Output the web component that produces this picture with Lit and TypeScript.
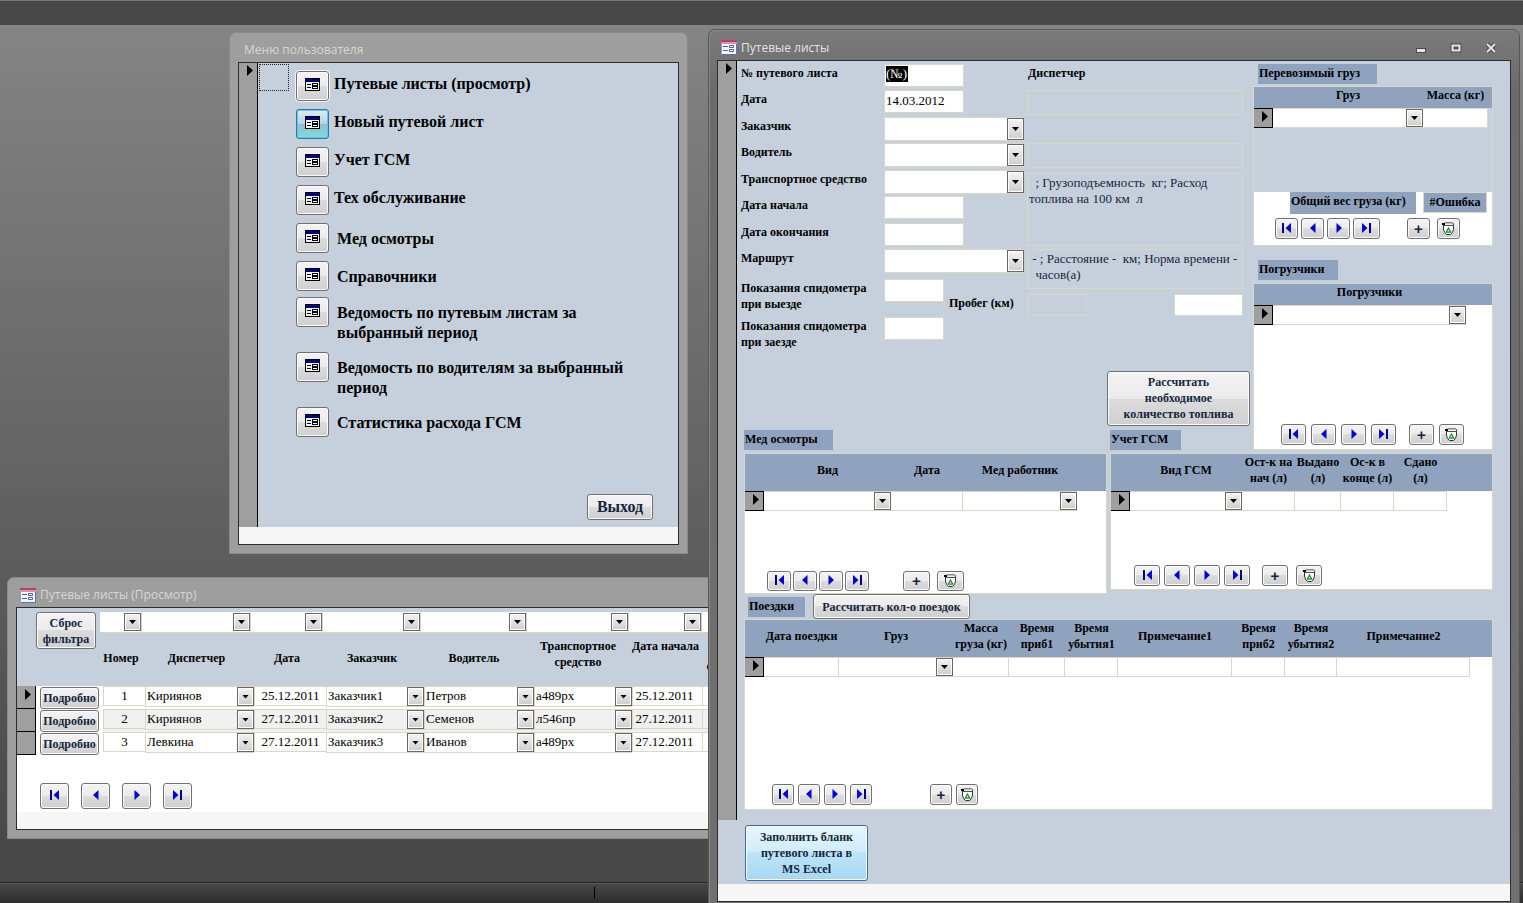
import { LitElement, html, css, svg, nothing, TemplateResult } from "lit";
import { customElement, state } from "lit/decorators.js";
import { classMap } from "lit/directives/class-map.js";

type Column = { title: string; width: number; combo?: boolean };
type Trip = {
  id: number;
  dispatcher: string;
  date: string;
  customer: string;
  driver: string;
  vehicle: string;
  start: string;
};

const trips: Trip[] = [
  { id: 1, dispatcher: "Кириянов", date: "25.12.2011", customer: "Заказчик1", driver: "Петров", vehicle: "а489рх", start: "25.12.2011" },
  { id: 2, dispatcher: "Кириянов", date: "27.12.2011", customer: "Заказчик2", driver: "Семенов", vehicle: "л546пр", start: "27.12.2011" },
  { id: 3, dispatcher: "Левкина", date: "27.12.2011", customer: "Заказчик3", driver: "Иванов", vehicle: "а489рх", start: "27.12.2011" },
];

const filters: Column[] = [
  { title: "Номер", width: 42 },
  { title: "Диспетчер", width: 109 },
  { title: "Дата", width: 72 },
  { title: "Заказчик", width: 98 },
  { title: "Водитель", width: 106 },
  { title: "Транспортное средство", width: 102 },
  { title: "Дата начала", width: 73 },
  { title: "Дата окончания", width: 68 },
];

const menu: { title: string; report?: boolean; tall?: boolean }[] = [
  { title: "Путевые листы (просмотр)" },
  { title: "Новый путевой лист" },
  { title: "Учет ГСМ" },
  { title: "Тех обслуживание" },
  { title: "Мед осмотры", report: true },
  { title: "Справочники", report: true },
  { title: "Ведомость по путевым листам за выбранный период", report: true, tall: true },
  { title: "Ведомость по водителям за выбранный период", report: true, tall: true },
  { title: "Статистика расхода ГСМ", report: true, tall: true },
];

const cargoColumns: Column[] = [
  { title: "Груз", width: 150, combo: true },
  { title: "Масса (кг)", width: 65 },
];
const loaderColumns: Column[] = [{ title: "Погрузчики", width: 193, combo: true }];
const medColumns: Column[] = [
  { title: "Вид", width: 127, combo: true },
  { title: "Дата", width: 72 },
  { title: "Мед работник", width: 114, combo: true },
];
const fuelColumns: Column[] = [
  { title: "Вид ГСМ", width: 112, combo: true },
  { title: "Ост-к на нач (л)", width: 53 },
  { title: "Выдано (л)", width: 46 },
  { title: "Ос-к в конце (л)", width: 53 },
  { title: "Сдано\n(л)", width: 53 },
];
const tripColumns: Column[] = [
  { title: "Дата поездки", width: 75 },
  { title: "Груз", width: 114, combo: true },
  { title: "Масса груза (кг)", width: 56 },
  { title: "Время приб1", width: 56 },
  { title: "Время убытия1", width: 53 },
  { title: "Примечание1", width: 114 },
  { title: "Время приб2", width: 53 },
  { title: "Время убытия2", width: 52 },
  { title: "Примечание2", width: 133 },
];

const bar = (x: number) => svg`<rect x=${x} y="0" width="2" height="10" fill="#00008c"/>`;
const glyphs: Record<string, TemplateResult> = {
  first: html`<svg class="glyph" width="9" height="10" viewBox="0 0 9 10">${bar(0)}<path d="M9 0v10L3.500 5z" fill="#0000dc"/></svg>`,
  prev: html`<svg class="glyph" width="6" height="10" viewBox="0 0 6 10"><path d="M5.500 0v10L0 5z" fill="#0000dc"/></svg>`,
  next: html`<svg class="glyph" width="6" height="10" viewBox="0 0 6 10"><path d="M.5 0v10L6 5z" fill="#0000dc"/></svg>`,
  last: html`<svg class="glyph" width="9" height="10" viewBox="0 0 9 10"><path d="M0 0v10l5.500-5z" fill="#0000dc"/>${bar(7)}</svg>`,
};

const trash = html`<svg class="trash" width="13" height="13" viewBox="0 0 13 13">
  <path d="M1.500 3v4l1 3.500 2 2h4l2-2 1-3.500V3z" fill="#fff" stroke="#333"/>
  <path d="M1 2.500L3 .8h7.500l1.500 1.200-1 1.500H2z" fill="#ececec" stroke="#333" stroke-width=".8"/>
  <rect x="0" y="1" width="3" height="2" fill="#000"/>
  <path d="M6.500 6l2.300 4.200H4.200z" fill="#e4f8e4" stroke="#138a2a" stroke-width="1.200"/>
</svg>`;

const formGlyph = html`<svg class="form-glyph" width="15" height="13" viewBox="0 0 15 13" shape-rendering="crispEdges">
  <rect x=".5" y=".5" width="14" height="12" fill="#f2f2f2" stroke="#000"/>
  <rect x="1" y="1" width="13" height="3" fill="#000080"/>
  <path d="M2 6.500h4M2 9.500h4" stroke="#000"/>
  <rect x="7.500" y="5.500" width="5" height="2" fill="#fff" stroke="#000"/>
  <rect x="7.500" y="8.500" width="5" height="2" fill="#fff" stroke="#000"/>
</svg>`;

const windowGlyph = html`<svg width="16" height="15" viewBox="0 0 16 15">
  <rect x=".5" y=".5" width="15" height="14" fill="#f4f7fd" stroke="#8d9cc4"/>
  <rect x="0" y="0" width="16" height="4" fill="#b8406a"/>
  <rect x="0" y="2" width="16" height="2" fill="#dd8fae"/>
  <path d="M2 6.500h5M2 10.500h5" stroke="#4a62a4"/>
  <path d="M8.500 5.500h4v2h-4zM8.500 9.500h4v2h-4z" fill="#fff" stroke="#4a62a4"/>
  <path d="M15.500 4v10.500H1" fill="none" stroke="#5873b4"/>
</svg>`;

@customElement("app-root")
export class AppRoot extends LitElement {
  @state() private active = 1;

  static styles = css`
    :host {
      --panel: #c5d0dc;
      --band: #8fa3be;
      --line: #d9d7c6;
      --ink: #14263e;
      display: block;
      height: 100vh;
      font: 13px/16px "Liberation Serif", "Times New Roman", serif;
      color: #000;
    }
    * { box-sizing: border-box; }
    button, input, select, textarea { font: inherit; color: inherit; margin: 0; }
    .desktop {
      position: relative;
      height: 100%;
      overflow: hidden;
      display: flex;
      flex-direction: column;
      background: linear-gradient(#848484 25px, #484848 850px);
    }
    .ribbon { height: 25px; background: #484848; border-top: 1px solid #777; }
    .space { flex: 1; }
    .status {
      height: 21px;
      display: grid;
      grid-template-columns: 595px 1fr;
      border-top: 1px solid #242424;
      background: linear-gradient(#5a5a5a 1px, #474747 1px, #2e2e2e);
    }
    .status span { border-right: 1px solid #000; margin: 4px 0; }

    .window {
      position: absolute;
      display: flex;
      flex-direction: column;
      padding: 0 8px 8px;
      background: #9e9e9e;
      border: 1px solid #8a8a8a;
      border-radius: 7px 7px 0 0;
    }
    .menu-window { left: 229px; top: 32px; width: 459px; }
    .list-window { left: 7px; top: 577px; width: 790px; }
    .form-window {
      left: 708px;
      right: 3px;
      top: 29px;
      background: linear-gradient(#7b7b7b, #6b6b6b 60px, #707070);
      border-color: #565656;
      box-shadow: inset 1px 1px 0 #878787;
    }
    .title {
      display: flex;
      align-items: center;
      gap: 4px;
      height: 29px;
      padding: 5px 4px 0;
      color: #d6d6d6;
      font: 12px/16px "Open Sans", "Noto Sans", sans-serif;
    }
    .menu-window .title { padding-left: 6px; }
    .form-window .title { height: 30px; color: #e2e2e2; }
    .title h1 { flex: 1; margin: 0; font: inherit; }
    .caption { display: flex; gap: 17px; padding-right: 7px; }
    .caption button { width: 18px; height: 14px; padding: 0; border: 0; background: none; display: grid; place-items: center; }
    .client { border: 1px solid #2d2d2d; background: var(--panel); overflow: hidden; }
    .strip { height: 17px; background: #f6f6f6; }
    .record { display: flex; }
    .selector { width: 19px; flex: none; background: #9f9f9f; border-right: 1px solid #000; padding: 2px 0 0 8px; }
    .pointer { display: block; width: 6px; height: 11px; background: #000; clip-path: polygon(0 0, 100% 50%, 0 100%); }

    .push {
      border: 1px solid #707070;
      border-radius: 3px;
      box-shadow: inset 0 0 0 1px #fbfbfb;
      background: linear-gradient(#f3f3f3, #ebebeb 50%, #dcdcdc 50%, #cfcfcf);
      color: var(--ink);
      font-weight: bold;
      font-size: 12px;
      padding: 0;
      text-align: center;
    }

    /* user menu */
    .menu-body { flex: 1; display: flex; height: 464px; padding: 1px 25px 7px 1px; }
    .focus { width: 30px; height: 27px; border: 1px dotted #222; }
    .menu-main { flex: 1; display: flex; flex-direction: column; justify-content: space-between; padding: 7px 0 0 7px; }
    .menu { list-style: none; margin: 0; padding: 0; }
    .menu li { display: flex; gap: 5px; height: 38px; font: bold 16px/20px "Liberation Serif", serif; }
    .menu li.report { gap: 8px; }
    .menu li.tall { height: 55px; }
    .menu li.report:not(.tall) + .tall { margin-top: -2px; }
    .menu label { padding-top: 3px; max-width: 300px; }
    .menu .report label { padding-top: 6px; }
    .menu button { width: 33px; height: 30px; flex: none; }
    .menu li:first-child button { outline: 1px solid #f4f4f4; }
    .menu .form-glyph { display: block; margin: 0 auto 3px; }
    .menu button.on {
      border-color: #2b78a8;
      box-shadow: inset 0 0 0 1px #6cc4e4;
      background: linear-gradient(#dcebf3, #b5d3e3 50%, #8fbdd4 50%, #7fdcd8);
    }
    .exit { align-self: flex-end; width: 66px; height: 26px; font-size: 16px; }

    /* combos */
    .combo { display: grid; background: #fff; min-width: 0; }
    .combo select, .arrow { grid-area: 1 / 1; }
    .combo select { appearance: none; width: 100%; min-width: 0; height: 100%; border: 0; background: none; padding: 0 18px 2px 2px; }
    .arrow {
      justify-self: end;
      width: 17px;
      margin: 1px 0;
      border: 1px solid #6b675f;
      box-shadow: inset 0 0 0 1px #fff;
      background: linear-gradient(#f4f4f4, #cdcdcd);
      pointer-events: none;
      display: grid;
      place-items: center;
    }
    .arrow::after { content: ""; width: 7px; height: 4px; background: #000; clip-path: polygon(0 0, 100% 0, 50% 100%); }

    /* list of waybills */
    .list-head { display: flex; height: 78px; padding: 4px 0 0 19px; font-weight: bold; font-size: 12px; }
    .reset { width: 60px; height: 37px; margin-right: 4px; }
    .filter { flex: none; display: flex; flex-direction: column; text-align: center; }
    .filter .combo { height: 21px; border-bottom: 1px solid var(--line); border-right: 1px solid var(--line); }
    .filter label { flex: 1; display: grid; align-content: center; padding-bottom: 4px; }
    .filter.raised label { align-content: start; padding-top: 5px; }
    .list-body { background: #fff; }
    table { border-collapse: separate; border-spacing: 0; table-layout: fixed; width: 100%; }
    td, th { padding: 0; }
    .rows td { height: 23px; vertical-align: top; }
    .rows .mark { background: #9f9f9f; border: solid #000; border-width: 0 1px 1px 0; padding: 3px 0 0 8px; }
    .rows .detail { padding: 1px 4px 0; background: #fff; }
    .rows .push { display: block; width: 59px; height: 22px; }
    .rows tr:nth-child(even) .cell, .rows tr:nth-child(even) .combo { background: #f1f1f1; }
    .cell input { display: block; width: 100%; height: 20px; border: solid var(--line); border-width: 1px 0 1px 1px; background: none; padding: 0 0 1px; text-align: center; }
    .cell .combo { height: 21px; border: solid var(--line); border-width: 1px 0 1px 1px; }
    .cell .combo select { padding-left: 1px; }
    .cell .combo .arrow { margin: 0; }
    .cell.start input { padding-right: 6px; }

    /* record navigation */
    .nav { display: flex; }
    .nav .push { display: grid; place-items: center; height: 21px; width: 25px; padding-bottom: 2px; }
    .nav .plus { font: bold 15px/16px "Liberation Sans", Arial, sans-serif; padding: 0; }
    .nav .trash-button { padding-bottom: 1px; }
    .nav-list { gap: 12px; padding: 28px 0 3px 23px; }
    .nav-list .push { width: 29px; height: 26px; }
    .nav-cargo { gap: 3px; padding: 3px 0 6px 21px; }
    .nav-cargo .push { width: 23px; }
    .nav-cargo .last { width: 27px; }
    .nav-cargo .plus { margin-left: 24px; }
    .nav-cargo .trash-button { margin-left: 4px; }
    .nav-loaders { gap: 5px; padding: 0 0 4px 27px; }
    .nav-loaders .plus { margin-left: 8px; }
    .nav-med { gap: 2px; padding: 0 0 2px 22px; }
    .nav-med .push { width: 24px; height: 20px; }
    .nav-med .plus { margin-left: 32px; }
    .nav-med .plus, .nav-med .trash-button { width: 27px; }
    .nav-med .trash-button { margin-left: 5px; }
    .nav-fuel { gap: 4px; padding: 0 0 3px 23px; }
    .nav-fuel .push { width: 26px; }
    .nav-fuel .plus { margin-left: 8px; }
    .nav-fuel .trash-button { margin-left: 4px; }
    .nav-trips { gap: 4px; padding: 0 0 4px 27px; }
    .nav-trips .push { width: 22px; }
    .nav-trips .plus { margin-left: 54px; }

    /* waybill form */
    .form-body { flex: 1; min-width: 0; padding: 3px 17px 10px 4px; }
    .top { display: grid; grid-template-columns: 1fr 240px; gap: 3px; }
    .left { display: flex; flex-direction: column; min-width: 0; }
    .fields {
      display: grid;
      grid-template-columns: 143px 143px 1fr;
      grid-template-rows: 26px 27px 26px 27px 26px 27px 26px 30px 38px 38px;
      padding-right: 7px;
    }
    .fields label { padding-top: 1px; font-weight: bold; font-size: 12px; white-space: nowrap; }
    .fields label.wrap { white-space: normal; padding-right: 8px; }
    .fields > label { grid-column: 1; }
    .box { background: #fff; border: 1px solid var(--line); height: 23px; padding: 0 1px 2px; display: block; }
    .short { width: 80px; }
    .tiny { width: 60px; }
    .fields .combo { width: 140px; height: 24px; border: solid var(--line); border-width: 1px 0 1px 1px; }
    .fields .combo .arrow { margin: 0; }
    .chosen { padding: 1px; }
    .chosen input { display: block; width: 22px; height: 16px; border: 0; padding: 0; background: #000; color: #fff; }
    .mileage { display: flex; gap: 5px; }
    .mileage label { padding-top: 16px; }
    .info { grid-column: 3; grid-row: 1 / -1; display: flex; flex-direction: column; }
    .info label { height: 26px; padding-left: 1px; }
    .info .plain { width: 100%; height: 25px; border: 1px solid var(--line); background: none; color: var(--ink); resize: none; padding: 1px; display: block; overflow: hidden; outline: 0; }
    .info .driver { margin: 28px 0 5px; }
    .info .vehicle { height: 73px; margin-bottom: 3px; }
    .info .route { height: 40px; margin-bottom: 5px; }
    .totals { display: flex; justify-content: space-between; }
    .info .totals .plain { width: 60px; height: 22px; }
    .totals .box { width: 69px; height: 22px; }
    .fuel-button { align-self: flex-end; width: 143px; height: 55px; margin: 16px 0 4px; padding: 0 8px 2px; }
    .tags { display: grid; grid-template-columns: 366px 1fr; padding-left: 3px; }
    .tag { margin: 0; height: 20px; padding: 1px; background: var(--band); font-size: 12px; line-height: 16px; }
    .tag-cargo { width: 119px; margin: 0 0 2px 5px; }
    .tag-loaders { width: 80px; margin: 14px 0 3px 5px; }
    .tag-med { width: 89px; }
    .tag-fuel { width: 71px; }
    .tag-trips { width: 57px; }

    .sub { display: flex; flex-direction: column; border: 1px solid var(--line); background: #fff; }
    .sub th { background: var(--band); height: 37px; padding-bottom: 5px; font-size: 12px; white-space: pre-line; }
    .sub.flat th { height: 21px; padding-bottom: 5px; white-space: nowrap; }
    .sub td { height: 20px; border: solid var(--line); border-width: 1px 1px 1px 0; vertical-align: top; }
    .sub td.mark { background: #9f9f9f; border: 1px solid #000; border-left: 0; padding: 2px 0 0 8px; }
    .sub td.rest { border: 0; }
    .sub td.has-combo { border-right: 0; }
    .sub td input { display: block; width: 100%; height: 18px; border: 0; background: none; padding: 0 2px; }
    .sub .combo { height: 18px; }
    .sub .combo .arrow { margin: 0; height: 18px; }
    .sub .nav { margin-top: auto; }
    .cargo { height: 160px; }
    .cargo-body { height: 105px; background: var(--panel); }
    .cargo-body td:not(.mark):not(.rest) { background: #fff; }
    .summary { display: flex; gap: 7px; padding-left: 36px; font-weight: bold; font-size: 12px; white-space: nowrap; }
    .summary label { width: 126px; height: 22px; padding: 1px; background: var(--band); }
    .summary input { width: 64px; height: 21px; border: 1px solid var(--line); background: var(--band); text-align: center; padding: 0; }
    .loaders { height: 167px; }
    .middle { display: grid; grid-template-columns: 363fr 383fr; gap: 3px; padding: 3px 0 0 3px; align-items: start; }
    .med { height: 141px; }
    .fuel { height: 137px; }
    .trip-bar { display: flex; align-items: center; gap: 8px; padding-left: 7px; }
    .trip-button { width: 157px; height: 25px; }
    .trip { height: 191px; margin-left: 3px; }
    .form-foot { padding: 5px 27px 3px; }
    .excel {
      width: 123px;
      height: 56px;
      padding: 0 10px;
      border-color: #3c6fa0;
      background: linear-gradient(#e8f6fd, #d2edfb 45%, #bce4f9 50%, #a6d8f3);
    }
  `;

  private combo(name: string, value = "", id: string | typeof nothing = nothing) {
    return html`<span class="combo"
      ><select id=${id} aria-label=${name}><option>${value}</option></select
      ><span class="arrow"></span
    ></span>`;
  }

  private nav(kind: string, editable = true) {
    return html`<div class="nav nav-${kind}">
      <button class="push" aria-label="Первая запись">${glyphs.first}</button>
      <button class="push" aria-label="Предыдущая запись">${glyphs.prev}</button>
      <button class="push" aria-label="Следующая запись">${glyphs.next}</button>
      <button class="push last" aria-label="Последняя запись">${glyphs.last}</button>
      ${editable
        ? html`<button class="push plus" aria-label="Добавить">+</button>
            <button class="push trash-button" aria-label="Удалить">${trash}</button>`
        : nothing}
    </div>`;
  }

  private sheet(columns: Column[]) {
    return html`<table>
      <colgroup>
        <col style="width:19px" />
        ${columns.map((c) => html`<col style="width:${c.width}px" />`)}
        <col />
      </colgroup>
      <thead>
        <tr>
          <th></th>
          ${columns.map((c) => html`<th scope="col">${c.title}</th>`)}
          <th></th>
        </tr>
      </thead>
      <tbody>
        <tr>
          <td class="mark"><span class="pointer"></span></td>
          ${columns.map((c) =>
            c.combo
              ? html`<td class="has-combo">${this.combo(c.title)}</td>`
              : html`<td><input aria-label=${c.title} /></td>`
          )}
          <td class="rest"></td>
        </tr>
      </tbody>
    </table>`;
  }

  private menuWindow() {
    return html`<section class="window menu-window">
      <header class="title"><h1>Меню пользователя</h1></header>
      <div class="client">
        <div class="record">
          <div class="selector"><span class="pointer"></span></div>
          <div class="menu-body">
            <div class="focus"></div>
            <div class="menu-main">
              <ul class="menu">
                ${menu.map(
                  (m, i) => html`<li class=${classMap({ report: !!m.report, tall: !!m.tall })}>
                    <button
                      id="menu-${i}"
                      class=${classMap({ push: true, on: this.active === i })}
                      @click=${() => (this.active = i)}
                    >${formGlyph}</button>
                    <label for="menu-${i}">${m.title}</label>
                  </li>`
                )}
              </ul>
              <button class="push exit">Выход</button>
            </div>
          </div>
        </div>
        <div class="strip"></div>
      </div>
    </section>`;
  }

  private listWindow() {
    const widths = [19, 67, 42, 109, 72, 98, 110, 98, 70];
    return html`<section class="window list-window">
      <header class="title">${windowGlyph}<h1>Путевые листы (Просмотр)</h1></header>
      <div class="client">
        <div class="list-head">
          <button class="push reset">Сброс фильтра</button>
          ${filters.map(
            (f, i) => html`<div
              class=${classMap({ filter: true, raised: i === 5 || i === 6 })}
              style="width:${f.width}px"
            >
              ${this.combo(f.title, "", `filter-${i}`)}
              <label for="filter-${i}">${f.title}</label>
            </div>`
          )}
        </div>
        <div class="list-body">
          <table class="rows">
            <colgroup>
              ${widths.map((w) => html`<col style="width:${w}px" />`)}
              <col />
            </colgroup>
            <tbody>
              ${trips.map(
                (t, i) => html`<tr>
                  <td class="mark">${i === 0 ? html`<span class="pointer"></span>` : nothing}</td>
                  <td class="detail"><button class="push">Подробно</button></td>
                  <td class="cell"><input aria-label="Номер" .value=${String(t.id)} /></td>
                  <td class="cell">${this.combo("Диспетчер", t.dispatcher)}</td>
                  <td class="cell"><input aria-label="Дата" .value=${t.date} /></td>
                  <td class="cell">${this.combo("Заказчик", t.customer)}</td>
                  <td class="cell">${this.combo("Водитель", t.driver)}</td>
                  <td class="cell">${this.combo("Транспортное средство", t.vehicle)}</td>
                  <td class="cell start"><input aria-label="Дата начала" .value=${t.start} /></td>
                  <td class="cell"><input aria-label="Дата окончания" /></td>
                </tr>`
              )}
            </tbody>
          </table>
          ${this.nav("list", false)}
        </div>
        <div class="strip"></div>
      </div>
    </section>`;
  }

  private fields() {
    return html`<div class="fields">
      <label for="number">№ путевого листа</label>
      <span class="box short chosen"><input id="number" value="(№)" /></span>
      <label for="date">Дата</label>
      <input id="date" class="box short" value="14.03.2012" />
      <label for="customer">Заказчик</label>
      ${this.combo("Заказчик", "", "customer")}
      <label for="driver">Водитель</label>
      ${this.combo("Водитель", "", "driver")}
      <label for="vehicle">Транспортное средство</label>
      ${this.combo("Транспортное средство", "", "vehicle")}
      <label for="start">Дата начала</label>
      <input id="start" class="box short" />
      <label for="end">Дата окончания</label>
      <input id="end" class="box short" />
      <label for="route">Маршрут</label>
      ${this.combo("Маршрут", "", "route")}
      <label class="wrap" for="out">Показания спидометра при выезде</label>
      <div class="mileage">
        <input id="out" class="box tiny" />
        <label for="mileage">Пробег (км)</label>
      </div>
      <label class="wrap" for="in">Показания спидометра при заезде</label>
      <input id="in" class="box tiny" />
      <div class="info">
        <label for="dispatcher">Диспетчер</label>
        <input id="dispatcher" class="plain" readonly />
        <input class="plain driver" aria-label="Сведения о водителе" readonly />
        <textarea class="plain vehicle" aria-label="Сведения о транспорте" readonly
          .value=${"  ; Грузоподъемность  кг; Расход\nтоплива на 100 км  л"}></textarea>
        <textarea class="plain route" aria-label="Сведения о маршруте" readonly
          .value=${" - ; Расстояние -  км; Норма времени -\n  часов(а)"}></textarea>
        <div class="totals">
          <input id="mileage" class="plain" readonly />
          <input class="box" aria-label="Количество топлива" />
        </div>
      </div>
    </div>`;
  }

  private formWindow() {
    return html`<section class="window form-window">
      <header class="title">
        ${windowGlyph}
        <h1>Путевые листы</h1>
        <div class="caption">
          <button aria-label="Свернуть"><svg width="12" height="12"><rect x="1.500" y="6.500" width="9" height="4" fill="#e6e6e6" stroke="#4a4a4a"/></svg></button>
          <button aria-label="Развернуть"><svg width="12" height="12"><rect x="2.500" y="3.500" width="7" height="5" fill="none" stroke="#4a4a4a" stroke-width="4"/><rect x="2.500" y="3.500" width="7" height="5" fill="#555" stroke="#e6e6e6" stroke-width="2"/></svg></button>
          <button aria-label="Закрыть"><svg width="12" height="12"><path d="M2 2l8 8M10 2l-8 8" stroke="#4a4a4a" stroke-width="4"/><path d="M2 2l8 8M10 2l-8 8" stroke="#e6e6e6" stroke-width="2"/></svg></button>
        </div>
      </header>
      <div class="client">
        <div class="record">
          <div class="selector"><span class="pointer"></span></div>
          <div class="form-body">
            <div class="top">
              <div class="left">
                ${this.fields()}
                <button class="push fuel-button">Рассчитать необходимое количество топлива</button>
                <div class="tags">
                  <h2 class="tag tag-med">Мед осмотры</h2>
                  <h2 class="tag tag-fuel">Учет ГСМ</h2>
                </div>
              </div>
              <div class="right">
                <h2 class="tag tag-cargo">Перевозимый груз</h2>
                <div class="sub flat cargo">
                  <div class="cargo-body">${this.sheet(cargoColumns)}</div>
                  <div class="summary">
                    <label for="weight">Общий вес груза (кг)</label>
                    <input id="weight" value="#Ошибка" readonly />
                  </div>
                  ${this.nav("cargo")}
                </div>
                <h2 class="tag tag-loaders">Погрузчики</h2>
                <div class="sub flat loaders">${this.sheet(loaderColumns)} ${this.nav("loaders")}</div>
              </div>
            </div>
            <div class="middle">
              <div class="sub med">${this.sheet(medColumns)} ${this.nav("med")}</div>
              <div class="sub fuel">${this.sheet(fuelColumns)} ${this.nav("fuel")}</div>
            </div>
            <div class="trip-bar">
              <h2 class="tag tag-trips">Поездки</h2>
              <button class="push trip-button">Рассчитать кол-о поездок</button>
            </div>
            <div class="sub trip">${this.sheet(tripColumns)} ${this.nav("trips")}</div>
          </div>
        </div>
        <div class="form-foot">
          <button class="push excel">Заполнить бланк путевого листа в MS Excel</button>
        </div>
        <div class="strip"></div>
      </div>
    </section>`;
  }

  render() {
    return html`<main class="desktop">
      <div class="ribbon"></div>
      <div class="space"></div>
      <footer class="status"><span></span></footer>
      ${this.menuWindow()} ${this.listWindow()} ${this.formWindow()}
    </main>`;
  }
}
